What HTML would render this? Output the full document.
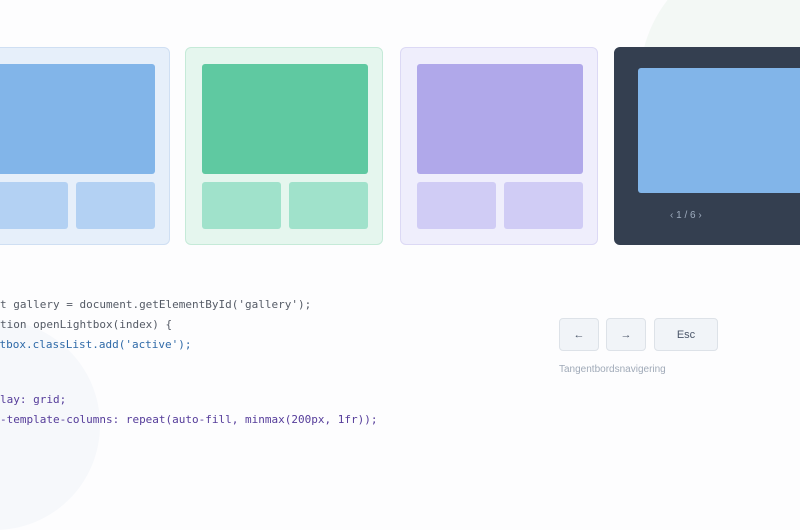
<!DOCTYPE html>
<html><head><style>
body{margin:0;width:800px;height:500px;overflow:hidden;background:#fdfdfe;position:relative;font-family:"Liberation Sans",sans-serif}
.abs{position:absolute}
.card{position:absolute;top:47px;width:196px;height:196px;border-radius:6px;border:1px solid}
.r{position:absolute;border-radius:3px}
.code{position:absolute;font-family:"DejaVu Sans Mono",monospace;font-size:11px;white-space:pre;line-height:20px}
.btn{position:absolute;top:318px;height:31px;background:#f1f4f8;border:1px solid #dde2e8;border-radius:4px;font-size:11px;color:#4a5568;display:flex;align-items:center;justify-content:center}
</style></head><body>
<div class="abs" style="left:640px;top:-50px;width:260px;height:260px;border-radius:50%;background:#f3f8f5"></div>
<div class="abs" style="left:-110px;top:320px;width:210px;height:210px;border-radius:50%;background:#f6f8fb"></div>

<div class="card" style="left:-28px;background:#e6effa;border-color:#cfdff3">
<div class="r" style="left:16px;top:16px;width:166px;height:110px;background:#82b5e9"></div>
<div class="r" style="left:16px;top:134px;width:79px;height:47px;background:#b3d1f3"></div>
<div class="r" style="left:103px;top:134px;width:79px;height:47px;background:#b3d1f3"></div>
</div>
<div class="card" style="left:185px;background:#e5f6ee;border-color:#c5ead8">
<div class="r" style="left:16px;top:16px;width:166px;height:110px;background:#5fc9a1"></div>
<div class="r" style="left:16px;top:134px;width:79px;height:47px;background:#a0e2cb"></div>
<div class="r" style="left:103px;top:134px;width:79px;height:47px;background:#a0e2cb"></div>
</div>
<div class="card" style="left:400px;background:#efeefc;border-color:#dcd9f5">
<div class="r" style="left:16px;top:16px;width:166px;height:110px;background:#b0a8ea"></div>
<div class="r" style="left:16px;top:134px;width:79px;height:47px;background:#d0ccf5"></div>
<div class="r" style="left:103px;top:134px;width:79px;height:47px;background:#d0ccf5"></div>
</div>
<div class="card" style="left:614px;width:200px;height:196px;background:#343f50;border-color:#343f50">
<div class="r" style="left:23px;top:20px;width:180px;height:125px;background:#82b5e9"></div>
<div class="abs" style="left:55px;top:162px;font-size:10px;color:#a0aec0">‹ 1 / 6 ›</div>
</div>

<div class="code" style="left:-26.5px;top:295px;color:#555b66">const gallery = document.getElementById('gallery');</div>
<div class="code" style="left:-26.5px;top:315px;color:#555b66">function openLightbox(index) {</div>
<div class="code" style="left:-27px;top:335px;color:#2f6aa8">lightbox.classList.add('active');</div>
<div class="code" style="left:-26.5px;top:390px;color:#553c9a">display: grid;</div>
<div class="code" style="left:-26.5px;top:410px;color:#553c9a">grid-template-columns: repeat(auto-fill, minmax(200px, 1fr));</div>

<div class="btn" style="left:559px;width:38px">←</div>
<div class="btn" style="left:606px;width:38px">→</div>
<div class="btn" style="left:654px;width:62px">Esc</div>
<div class="abs" style="left:559px;top:364px;font-size:10px;color:#a0aab8">Tangentbordsnavigering</div>
</body></html>
